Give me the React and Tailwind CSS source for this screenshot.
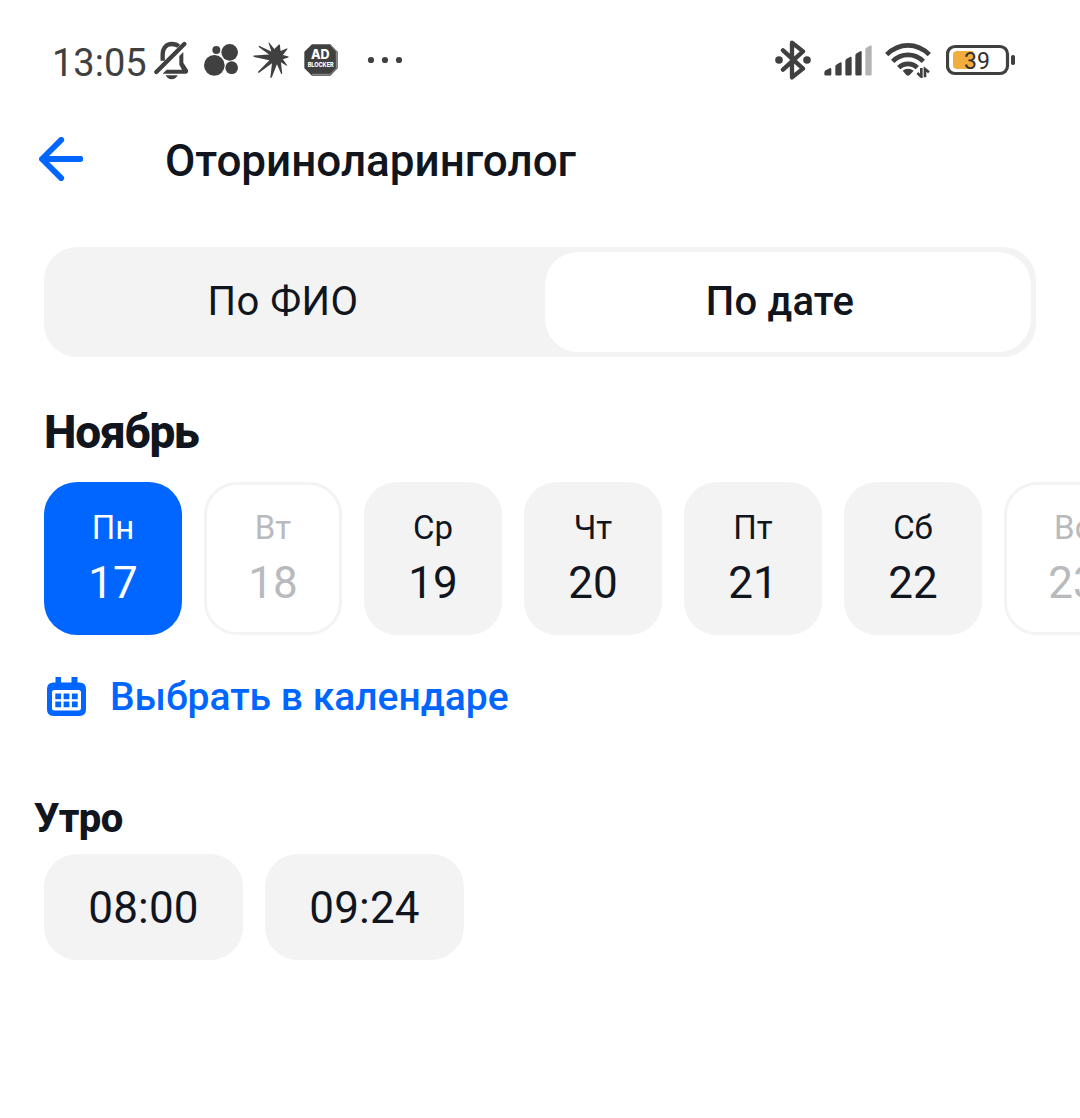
const DAYS = [
  { name: "Пн", date: 17, state: "selected" },
  { name: "Вт", date: 18, state: "disabled" },
  { name: "Ср", date: 19, state: "available" },
  { name: "Чт", date: 20, state: "available" },
  { name: "Пт", date: 21, state: "available" },
  { name: "Сб", date: 22, state: "available" },
  { name: "Вс", date: 23, state: "disabled" },
];

const SLOTS = ["08:00", "09:24"];

const DAY_STYLES = {
  selected: "bg-[#0066ff] text-white",
  disabled: "border-3 border-[#f3f3f3] bg-white text-[#b8babd]",
  available: "bg-[#f3f3f3] text-[#11151e]",
};

function BellOffIcon() {
  return (
    <svg viewBox="0 0 105 120" className="h-10 w-[35px]" fill="none" stroke="#404040" strokeWidth="12">
      <path d="M26 62V44c0-20 11-32 27-32 9 0 16 2 21 7" strokeWidth="13" />
      <path d="M76 48 88 36V68l14 22q2 10-6 11H26L38 89H84L76 74z" fill="#404040" stroke="none" />
      <path d="M7 96 91 12" strokeLinecap="round" strokeWidth="13" />
      <path d="M35 106h36c-4 8-10 12-18 12s-14-4-18-12z" fill="#404040" stroke="none" />
    </svg>
  );
}

function BubblesIcon() {
  return (
    <svg viewBox="0 0 105 96" className="h-8 w-[35px]" fill="#404040">
      <circle cx="31" cy="64" r="31" />
      <circle cx="77" cy="25" r="25" />
      <circle cx="37" cy="18" r="12" />
      <circle cx="83" cy="71" r="19" />
    </svg>
  );
}

function SparkIcon() {
  return (
    <svg viewBox="0 0 108 112" className="h-[37px] w-9" fill="#404040">
      <path d="M46 1 49 2 64 21 79 7 81 9 83 27 103 19 104 21 90 39 107 44V47L90 52 103 70 101 72 84 61 88 96 85 97 72 67 56 108H52L57 64 17 94 14 91 49 55 1 45V41L48 38 16 14 18 11 55 29Z" />
    </svg>
  );
}

function AdBlockerIcon() {
  return (
    <svg viewBox="0 0 102 96" className="h-8 w-[34px]">
      <path d="M24 1H79L101 23V73L79 95H24L1 73V23Z" fill="#404040" />
      <path d="M80 4 97 22V73L78 91H24" fill="none" stroke="#a3a3a3" strokeWidth="2.5" />
      <g className="font-[Inter,sans-serif] font-extrabold" fill="#fff">
        <text x="21" y="45" fontSize="38" textLength="56" lengthAdjust="spacingAndGlyphs">
          AD
        </text>
        <text x="11" y="68" fontSize="19" textLength="78" lengthAdjust="spacingAndGlyphs">
          BLOCKER
        </text>
      </g>
    </svg>
  );
}

function MoreIcon() {
  return (
    <svg viewBox="0 0 36 8" className="h-2 w-9" fill="#404040">
      <circle cx="4" cy="4" r="3.1" />
      <circle cx="18" cy="4" r="3.1" />
      <circle cx="32" cy="4" r="3.1" />
    </svg>
  );
}

function BluetoothIcon() {
  return (
    <svg viewBox="0 0 108 120" className="h-10 w-9" fill="none" stroke="#404040" strokeWidth="13">
      <path d="M24 31 84 86 51 112V8L84 34 24 89" strokeLinejoin="round" strokeLinecap="round" />
      <circle cx="12" cy="60" r="11.5" fill="#404040" stroke="none" />
      <circle cx="96" cy="60" r="11.5" fill="#404040" stroke="none" />
    </svg>
  );
}

function SignalIcon() {
  return (
    <svg viewBox="0 0 144 92" className="h-[31px] w-12" fill="#404040">
      <path d="M1 82q0-5 4-7l12-6q5-2 5 3v15q0 4-4 4H5q-4 0-4-4z" />
      <path d="M34 64q0-4 4-6l10-6q5-2 5 3v32q0 4-4 4H38q-4 0-4-4z" />
      <path d="M64 48q0-5 4-7l11-6q4-2 4 3v49q0 4-4 4H68q-4 0-4-4z" />
      <path d="M94 31q0-5 4-7l11-6q4-2 4 3v66q0 4-4 4H98q-4 0-4-4z" />
      <path d="M124 14q0-5 4-7l11-6q4-2 4 3v83q0 4-4 4H128q-4 0-4-4z" fill="#b3b3b3" />
    </svg>
  );
}

function WifiIcon() {
  return (
    <svg viewBox="0 0 141 108" className="h-9 w-[47px]" fill="none" stroke="#404040" strokeWidth="14">
      <path d="M5 38C43 1 95 1 133 38" />
      <path d="M23 58C49 32 89 32 115 58" />
      <path d="M41 77C57 62 81 62 97 77" />
      <path d="M69 80c7 0 12 2 17 6L74 99q-5 4-10 0L53 86c5-4 9-6 16-6z" fill="#404040" stroke="none" />
      <path d="M109 78V104L97 93M120 106V81L132 91" strokeWidth="8" />
    </svg>
  );
}

function BatteryIcon() {
  return (
    <svg viewBox="0 0 70 32" className="h-8 w-[70px]">
      <rect x="1.5" y="2.5" width="60" height="27" rx="7.5" fill="none" stroke="#404040" strokeWidth="3.2" />
      <path d="M11 7H27V25H11q-4 0-4-4V11q0-4 4-4z" fill="#f2ae3d" />
      <rect x="65" y="11" width="4" height="10" rx="1.8" fill="#404040" />
      <text x="31" y="24.500" textAnchor="middle" fontSize="23" fill="#303030">
        39
      </text>
    </svg>
  );
}

function BackIcon() {
  return (
    <svg viewBox="0 0 44 44" className="h-11 w-11" fill="none" stroke="#0066ff" strokeWidth="5.8">
      <path d="M22.2 2.9 3 22 22.2 41.1M3 22H41.5" strokeLinecap="round" strokeLinejoin="round" />
    </svg>
  );
}

function CalendarIcon() {
  return (
    <svg viewBox="0 0 39 39" className="h-[39px] w-[39px]" fill="#0066ff">
      <path
        fillRule="evenodd"
        d="M8.5 0H14V5.5H24.5V0H30.5V5.5H32.5q6.5 0 6.5 6.5v20.500q0 6.5-6.5 6.5H6.5q-6.5 0-6.5-6.5V12q0-6.5 6.500-6.500h2zM7.500 13q-2.500 0-2.500 2.500v15.500q0 2.500 2.500 2.500h24q2.500 0 2.500-2.500V15.500q0-2.500-2.500-2.500z"
      />
      <path d="M8.3 16.500h5.800v5.800H8.3zM16.600 16.500h5.800v5.800h-5.800zM24.900 16.500h5.800v5.800h-5.800zM8.300 24.500h5.800v5.800H8.300zM16.600 24.500h5.800v5.800h-5.800zM24.900 24.500h5.800v5.800h-5.800z" />
    </svg>
  );
}

function StatusBar() {
  return (
    <div className="flex h-[120px] items-center justify-between pr-16 pl-[52px] text-[#404040]">
      <div className="flex items-center">
        <span className="w-[102px] pt-1.5 text-[38px] leading-none">13:05</span>
        <BellOffIcon />
        <div className="ml-[15px]">
          <BubblesIcon />
        </div>
        <div className="ml-[14px]">
          <SparkIcon />
        </div>
        <div className="ml-[15px]">
          <AdBlockerIcon />
        </div>
        <div className="ml-[29px]">
          <MoreIcon />
        </div>
      </div>
      <div className="flex items-center">
        <BluetoothIcon />
        <div className="ml-[13px]">
          <SignalIcon />
        </div>
        <div className="ml-[13px]">
          <WifiIcon />
        </div>
        <div className="ml-[14px]">
          <BatteryIcon />
        </div>
      </div>
    </div>
  );
}

function DayCard({ day }) {
  return (
    <button
      className={`flex h-[153px] w-[138px] shrink-0 flex-col items-center justify-center rounded-[33px] pt-0.5 ${DAY_STYLES[day.state]}`}
    >
      <span className="text-[33px] leading-[46px]">{day.name}</span>
      <span className="text-[44px] leading-[64px]">{day.date}</span>
    </button>
  );
}

export default function App() {
  return (
    <div className="h-[1118px] w-[1080px] overflow-hidden bg-white font-[Roboto,sans-serif] text-[#11151e]">
      <StatusBar />

      <header className="flex h-[78px] items-center gap-[82px] pl-[39px]">
        <BackIcon />
        <h1 className="pt-1 text-[44px] leading-none font-medium">Оториноларинголог</h1>
      </header>

      <div className="mx-[44px] mt-[49px] flex h-[110px] gap-[10px] rounded-[33px] bg-[#f3f3f3] p-[5px] text-[40px]">
        <button className="flex-1 pr-[18px] tracking-[0.5px]">По ФИО</button>
        <button className="w-[486px] rounded-[33px] bg-white pr-[16px] font-medium tracking-[0.2px]">
          По дате
        </button>
      </div>

      <h2 className="mt-[45px] ml-[44px] text-[46px] leading-[60px] font-extrabold tracking-[-1.2px]">
        Ноябрь
      </h2>
      <div className="mt-[20px] flex gap-[22px] overflow-hidden pl-[44px]">
        {DAYS.map((day) => (
          <DayCard key={day.date} day={day} />
        ))}
      </div>

      <button className="mt-[32px] ml-[47px] flex h-[60px] items-center gap-[24px] text-[#0066ff]">
        <div className="pb-0.5">
          <CalendarIcon />
        </div>
        <span className="text-[39px] leading-none font-medium">Выбрать в календаре</span>
      </button>

      <h3 className="mt-[67px] ml-[34px] text-[40px] leading-[50px] font-extrabold tracking-[-0.6px]">
        Утро
      </h3>
      <div className="mt-[10px] flex gap-[22px] pl-[44px]">
        {SLOTS.map((slot) => (
          <button
            key={slot}
            className="h-[106px] w-[199px] rounded-[33px] bg-[#f3f3f3] pt-0.5 text-[44px] tracking-[0.2px]"
          >
            {slot}
          </button>
        ))}
      </div>
    </div>
  );
}
